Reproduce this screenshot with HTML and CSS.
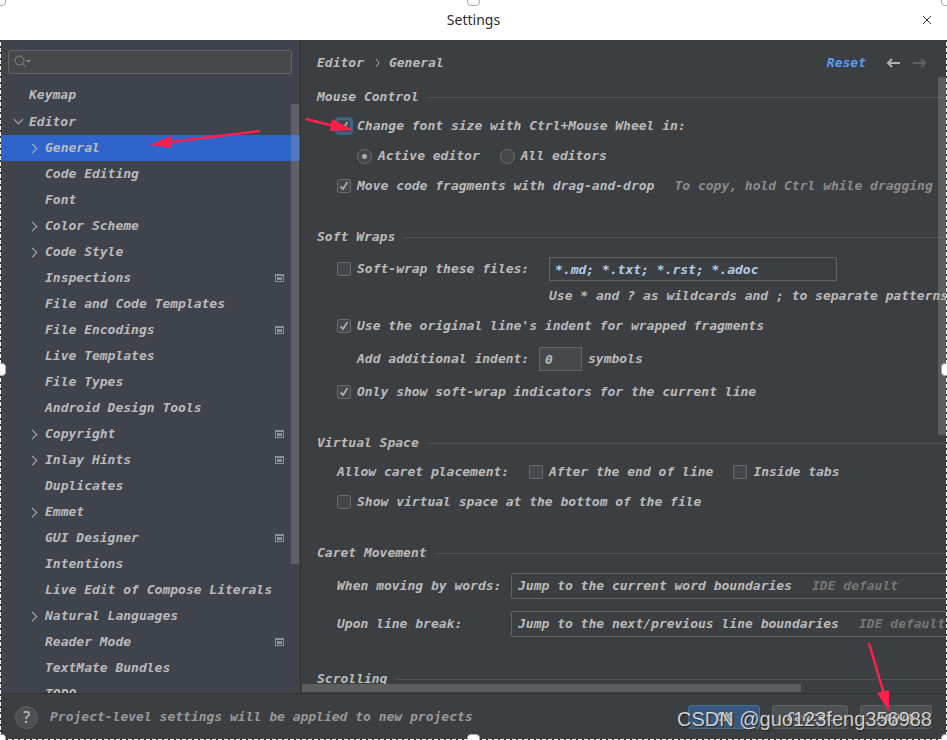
FILE: index.html
```html
<!DOCTYPE html>
<html lang="en">

<head>
    <meta charset="UTF-8">
    <title>Settings</title>
    <link rel="stylesheet" href="styles.css">
</head>

<body>
    <header class="titlebar">
        <h1>Settings</h1>
        <button class="close" aria-label="Close">
            <svg width="10" height="10" viewBox="0 0 10 10"><path d="M1 1l8 8M9 1l-8 8" /></svg>
        </button>
    </header>

    <div class="main">
        <nav class="sidebar">
            <div class="search">
                <svg width="18" height="14" viewBox="0 0 18 14">
                    <circle cx="5.5" cy="5.5" r="4.5" />
                    <path d="M8.8 8.8l3.4 3.4" />
                    <path class="fill" d="M12 5h5l-2.500 2.800z" />
                </svg>
                <input type="text" aria-label="Search settings">
            </div>
            <ul class="tree">
                <li class="top"><a href="#">Keymap</a></li>
                <li class="top open"><a href="#">Editor</a></li>
                <li class="parent selected"><a href="#">General</a></li>
                <li><a href="#">Code Editing</a></li>
                <li><a href="#">Font</a></li>
                <li class="parent"><a href="#">Color Scheme</a></li>
                <li class="parent"><a href="#">Code Style</a></li>
                <li class="project"><a href="#">Inspections</a></li>
                <li><a href="#">File and Code Templates</a></li>
                <li class="project"><a href="#">File Encodings</a></li>
                <li><a href="#">Live Templates</a></li>
                <li><a href="#">File Types</a></li>
                <li><a href="#">Android Design Tools</a></li>
                <li class="parent project"><a href="#">Copyright</a></li>
                <li class="parent project"><a href="#">Inlay Hints</a></li>
                <li><a href="#">Duplicates</a></li>
                <li class="parent"><a href="#">Emmet</a></li>
                <li class="project"><a href="#">GUI Designer</a></li>
                <li><a href="#">Intentions</a></li>
                <li><a href="#">Live Edit of Compose Literals</a></li>
                <li class="parent"><a href="#">Natural Languages</a></li>
                <li class="project"><a href="#">Reader Mode</a></li>
                <li><a href="#">TextMate Bundles</a></li>
                <li><a href="#">TODO</a></li>
            </ul>
            <div class="scrollbar tree-scroll"></div>
        </nav>

        <main class="content">
            <div class="crumbs">
                <span>Editor</span>
                <svg width="6" height="10" viewBox="0 0 6 10"><path d="M1 1l3 4-3 4" /></svg>
                <span>General</span>
                <a class="reset" href="#">Reset</a>
                <button class="arrow" aria-label="Back">
                    <svg width="14" height="10" viewBox="0 0 14 10"><path d="M14 5H2M6 1L2 5l4 4" /></svg>
                </button>
                <button class="arrow" aria-label="Forward" disabled>
                    <svg width="14" height="10" viewBox="0 0 14 10"><path d="M0 5h12M8 1l4 4-4 4" /></svg>
                </button>
            </div>

            <section>
                <h2>Mouse Control</h2>
                <div class="row">
                    <label class="option"><input type="checkbox" class="focused" checked>Change font size with Ctrl+Mouse Wheel in:</label>
                </div>
                <div class="row nested">
                    <label class="option"><input type="radio" name="zoom" checked>Active editor</label>
                    <label class="option"><input type="radio" name="zoom">All editors</label>
                </div>
                <div class="row">
                    <label class="option"><input type="checkbox" checked>Move code fragments with drag-and-drop</label>
                    <span class="hint">To copy, hold Ctrl while dragging</span>
                </div>
            </section>

            <section>
                <h2>Soft Wraps</h2>
                <div class="row tall files">
                    <label class="option"><input type="checkbox">Soft-wrap these files:</label>
                    <input class="field" type="text" value="*.md; *.txt; *.rst; *.adoc" aria-label="File patterns">
                </div>
                <p class="help">Use * and ? as wildcards and ; to separate patterns</p>
                <div class="row">
                    <label class="option"><input type="checkbox" checked>Use the original line's indent for wrapped fragments</label>
                </div>
                <div class="row tall nested indent">
                    <label for="indent">Add additional indent:</label>
                    <input class="field" type="text" id="indent" value="0">
                    <span>symbols</span>
                </div>
                <div class="row">
                    <label class="option"><input type="checkbox" checked>Only show soft-wrap indicators for the current line</label>
                </div>
            </section>

            <section>
                <h2>Virtual Space</h2>
                <div class="row caret">
                    <span class="caption">Allow caret placement:</span>
                    <label class="option"><input type="checkbox">After the end of line</label>
                    <label class="option"><input type="checkbox">Inside tabs</label>
                </div>
                <div class="row">
                    <label class="option"><input type="checkbox">Show virtual space at the bottom of the file</label>
                </div>
            </section>

            <section>
                <h2>Caret Movement</h2>
                <div class="row combo-row">
                    <label for="words">When moving by words:</label>
                    <div class="combo">
                        <select id="words"><option>Jump to the current word boundaries</option></select>
                        <span>IDE default</span>
                    </div>
                </div>
                <div class="row combo-row">
                    <label for="break">Upon line break:</label>
                    <div class="combo">
                        <select id="break"><option>Jump to the next/previous line boundaries</option></select>
                        <span>IDE default</span>
                    </div>
                </div>
            </section>

            <section>
                <h2>Scrolling</h2>
            </section>
            <div class="scrollbar page-scroll"></div>
            <div class="scrollbar page-scroll-x"></div>
        </main>
    </div>

    <footer class="footer">
        <button class="help-button" aria-label="Help">?</button>
        <p>Project-level settings will be applied to new projects</p>
        <button class="btn primary">OK</button>
        <button class="btn cancel">Cancel</button>
        <button class="btn">Apply</button>
    </footer>

    <!-- annotations over the dialog -->
    <svg class="pointer to-general" width="112" height="22" viewBox="0 0 112 22">
        <path d="M110 3L20 14" /><path class="head" d="M0 17L21 8l1 12z" />
    </svg>
    <svg class="pointer to-checkbox" width="50" height="18" viewBox="0 0 50 18">
        <path d="M1 4l28 7" /><path class="head" d="M27 4l21 11-23 1z" />
    </svg>
    <svg class="pointer to-apply" width="26" height="72" viewBox="0 0 26 72">
        <path d="M3 2l15 51" /><path class="head" d="M11 52l12-3 0 21z" />
    </svg>
    <div class="watermark">CSDN @guo123feng356988</div>

    <div class="selection">
        <i class="handle tl"></i><i class="handle tc"></i><i class="handle tr"></i>
        <i class="handle ml"></i><i class="handle mr"></i>
        <i class="handle bl"></i><i class="handle bc"></i><i class="handle br"></i>
    </div>
</body>

</html>
```
FILE: styles.css
```css
*,
*::before,
*::after {
    margin: 0;
    padding: 0;
    box-sizing: border-box;
}

body {
    position: relative;
    display: flex;
    flex-direction: column;
    height: 100vh;
    overflow: hidden;
    background-color: #3c3f41;
    color: #bbbbbb;
    font: italic bold 13px/18px "DejaVu Sans Mono", monospace;
    white-space: nowrap;
}

button,
input,
select {
    font: inherit;
    color: inherit;
}

button {
    border: none;
    background: none;
}

a {
    color: inherit;
    text-decoration: none;
}

svg {
    flex: none;
    fill: none;
    stroke: #afb1b3;
}

/* title bar */

.titlebar {
    flex: none;
    display: grid;
    grid-template-columns: 1fr auto 1fr;
    align-items: center;
    height: 40px;
    padding: 0 15px;
    background-color: #ffffff;
}

.titlebar h1 {
    grid-column: 2;
    color: #2d2d2d;
    font: normal 14px/20px "Noto Sans", sans-serif;
}

.close {
    justify-self: end;
    display: flex;
}

.close svg {
    stroke: #333333;
}

.main {
    flex: 1;
    display: flex;
    min-height: 0;
}

/* sidebar */

.sidebar {
    position: relative;
    flex: none;
    width: 301px;
    padding-top: 10px;
    overflow: hidden;
    background-color: #3e434c;
    border-right: 1px solid #323232;
}

.search {
    display: flex;
    align-items: center;
    height: 24px;
    margin: 0 8px 7px;
    padding: 0 5px;
    background-color: #45494a;
    border: 1px solid #646464;
    border-radius: 2px;
}

.search svg {
    stroke: #7f8b91;
}

.search .fill {
    fill: #7f8b91;
    stroke: none;
}

.search input {
    flex: 1;
    min-width: 0;
    border: none;
    outline: none;
    background: none;
}

.tree {
    list-style: none;
}

.tree li {
    display: flex;
    align-items: center;
    height: 26px;
    padding: 0 16px 0 45px;
}

.tree li a {
    flex: 1;
}

.tree .top {
    height: 27px;
    padding-left: 29px;
}

.tree .selected {
    background-color: #2f65ca;
}

.tree .open::before,
.tree .parent::before {
    content: "";
    width: 7px;
    height: 7px;
    margin: 0 9px 0 -16px;
    border: solid #afb1b3;
    border-width: 1px 1px 0 0;
    transform: rotate(45deg);
}

.tree .open::before {
    margin: -4px 7px 0 -14px;
    transform: rotate(135deg);
}

.tree .project::after {
    content: "";
    width: 9px;
    height: 8px;
    padding: 1px;
    background: #87939a content-box;
    border: 1px solid #87939a;
    border-top-width: 2px;
}

.scrollbar {
    position: absolute;
    background-color: rgba(166, 166, 166, 0.3);
}

.tree-scroll {
    top: 64px;
    right: 1px;
    width: 8px;
    height: 460px;
}

/* settings page */

.content {
    position: relative;
    flex: 1;
    min-width: 0;
    padding-left: 16px;
    overflow: hidden;
}

.crumbs {
    display: flex;
    align-items: center;
    height: 43px;
    padding: 3px 20px 0 0;
}

.crumbs svg {
    display: block;
}

.crumbs > svg {
    margin: 0 8px 0 11px;
}

.reset {
    margin-left: auto;
    margin-right: 20px;
    color: #589df6;
}

.arrow + .arrow {
    margin-left: 13px;
}

.arrow svg {
    stroke-width: 2;
}

.arrow:disabled svg {
    stroke: #5f6162;
}

section {
    margin-bottom: 22px;
}

h2 {
    display: flex;
    align-items: center;
    gap: 8px;
    height: 28px;
    font: inherit;
}

h2::after {
    content: "";
    flex: 1;
    height: 1px;
    background-color: #515151;
}

.row {
    display: flex;
    align-items: center;
    gap: 20px;
    height: 30px;
    padding-left: 20px;
}

.row > * {
    flex: none;
}

.row.tall {
    height: 36px;
}

.row.nested {
    padding-left: 40px;
}

.option {
    display: flex;
    align-items: center;
    gap: 6px;
}

input[type="checkbox"],
input[type="radio"] {
    appearance: none;
    flex: none;
    width: 14px;
    height: 14px;
    background: #43494a center no-repeat;
    border: 1px solid #6b6b6b;
    border-radius: 2px;
}

input[type="checkbox"]:checked {
    background-image: url("data:image/svg+xml,%3Csvg xmlns='http://www.w3.org/2000/svg' width='12' height='12' fill='none' stroke='%23a7a7a7' stroke-width='2'%3E%3Cpath d='M2.500 6.500L5 9l4.500-7'/%3E%3C/svg%3E");
}

input[type="radio"] {
    width: 15px;
    height: 15px;
    border-radius: 50%;
}

input[type="radio"]:checked {
    background-image: radial-gradient(circle, #adadad 2px, transparent 3px);
}

input.focused {
    border-color: #43698e;
    box-shadow: 0 0 0 2px #3d6185;
}

.hint {
    color: #8c8c8c;
}

.field {
    height: 24px;
    padding: 0 5px;
    background-color: #45494a;
    border: 1px solid #646464;
}

.files,
.indent,
.caret,
.combo-row {
    gap: 0;
}

.files .option {
    width: 212px;
}

.files .field {
    width: 288px;
    background-color: #3c3f41;
    color: #b5cee8;
}

.help {
    height: 24px;
    padding-left: 232px;
}

.indent label {
    width: 182px;
}

.indent .field {
    width: 43px;
    margin-right: 6px;
}

.caption {
    width: 192px;
}

.caret .option + .option {
    margin-left: 20px;
}

.combo-row {
    height: 38px;
}

.combo-row label {
    width: 174px;
}

.combo {
    display: flex;
    align-items: center;
    gap: 20px;
    min-width: 480px;
    height: 26px;
    padding: 0 6px;
    border: 1px solid #646464;
    border-radius: 2px;
}

.combo select {
    appearance: none;
    border: none;
    background: none;
}

.combo span {
    color: #777777;
}

.page-scroll {
    top: 37px;
    right: 1px;
    width: 8px;
    height: 358px;
}

.page-scroll-x {
    left: 1px;
    bottom: 1px;
    width: 499px;
    height: 8px;
    background-color: #5c5d5e;
}

/* footer */

.footer {
    flex: none;
    display: flex;
    align-items: center;
    gap: 12px;
    height: 47px;
    padding: 0 15px;
    border-top: 1px solid #323232;
}

.footer p {
    flex: 1;
    color: #999999;
}

.help-button {
    width: 23px;
    height: 23px;
    background-color: #4c5052;
    border: 1px solid #5e6060;
    border-radius: 50%;
    font: normal 500 16px/20px "Noto Sans", sans-serif;
}

.btn {
    width: 72px;
    height: 24px;
    background-color: #4c5052;
    border: 1px solid #5e6060;
    border-radius: 3px;
}

.btn.cancel {
    width: 76px;
}

.btn.primary {
    background-color: #365880;
    border-color: #4c708c;
}

/* annotations */

.pointer {
    position: absolute;
    stroke: #ff1f4b;
    stroke-width: 2.5;
}

.pointer .head {
    fill: #ff1f4b;
    stroke: none;
}

.to-general {
    left: 150px;
    top: 128px;
}

.to-checkbox {
    left: 305px;
    top: 115px;
}

.to-apply {
    left: 866px;
    top: 641px;
}

.watermark {
    position: absolute;
    right: 15px;
    bottom: 8px;
    color: #d0d0d0;
    font: normal 20px/26px "Liberation Sans", sans-serif;
    text-shadow: 1px 1px 1px #222222;
}

.selection {
    position: absolute;
    inset: 0;
    pointer-events: none;
}

.selection::before {
    content: "";
    position: absolute;
    inset: 40px 0 0;
    background:
        repeating-linear-gradient(#333333 0 2px, #ffffff 2px 6px) left / 1px 100% no-repeat,
        repeating-linear-gradient(#333333 0 2px, #ffffff 2px 6px) right / 1px 100% no-repeat,
        repeating-linear-gradient(90deg, #333333 0 2px, #ffffff 2px 6px) bottom / 100% 1px no-repeat;
}

.handle {
    position: absolute;
    width: 13px;
    height: 13px;
    background-color: #ffffff;
    border: 1px solid #aaaaaa;
    border-radius: 4px;
}

.tl, .tc, .tr { top: -7px; }
.ml, .mr { top: calc(50% - 7px); }
.bl, .bc, .br { bottom: -7px; }
.tl, .ml, .bl { left: -7px; }
.tc, .bc { left: calc(50% - 7px); }
.tr, .mr, .br { right: -7px; }
```
